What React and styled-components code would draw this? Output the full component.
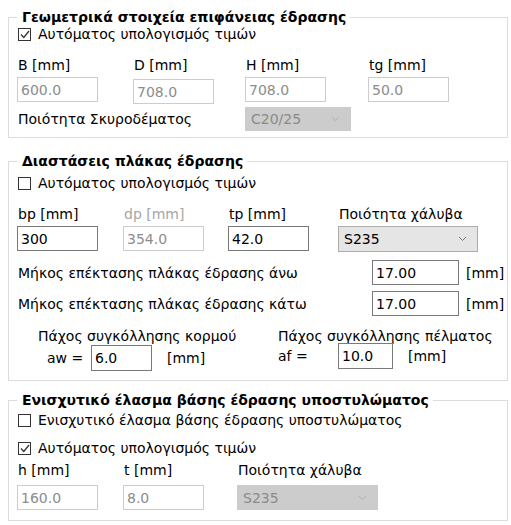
import styled, { createGlobalStyle } from "styled-components";

const GlobalStyle = createGlobalStyle`
  html, body {
    margin: 0;
    background: #fff;
  }
  body {
    font-family: "DejaVu Sans", Verdana, sans-serif;
    font-size: 14px;
    color: #000;
  }
`;

const Page = styled.div`
  width: 500px;
  padding: 9px 0 0 8px;
`;

const Section = styled.fieldset`
  margin: ${(p) => p.$top || 0}px 0 0 0;
  padding: 0 8px ${(p) => p.$bottom || 6}px 8px;
  border: 1px solid #dcdcdc;
  min-width: 0;
`;

const Legend = styled.legend`
  padding: 0 4px 0 5px;
  font-weight: bold;
  font-size: 14px;
  line-height: 16px;
  color: #000;
`;

const CheckRow = styled.label`
  display: flex;
  align-items: center;
  gap: 7px;
  height: 15px;
  margin-top: ${(p) => p.$top || 0}px;
  padding-left: 1px;
  line-height: 15px;
`;

const Box = styled.span`
  width: 11px;
  height: 11px;
  border: 1px solid #333;
  background: #fff;
  display: flex;
  align-items: center;
  justify-content: center;
`;

const Grid = styled.div`
  display: grid;
  grid-template-columns: ${(p) => p.$cols};
  margin-top: ${(p) => p.$top || 0}px;
  align-items: ${(p) => p.$align || "start"};
`;

const Label = styled.span`
  line-height: 15px;
  padding-left: 1px;
  white-space: nowrap;
  color: ${(p) => (p.$dim ? "#a6a6a6" : "#000")};
  grid-column: ${(p) => p.$span || "auto"};
`;

const Input = styled.input`
  box-sizing: border-box;
  width: ${(p) => p.$w || 81}px;
  height: ${(p) => p.$h || 25}px;
  margin: ${(p) => p.$shift || 0}px 0 0 0;
  padding: 0 3px;
  border: 1px solid ${(p) => (p.disabled ? "#cccccc" : "#7a7a7a")};
  background: #fff;
  font-family: inherit;
  font-size: 14px;
  color: ${(p) => (p.disabled ? "#8c8c8c" : "#000")};
  outline: none;
`;

const Select = styled.div`
  box-sizing: border-box;
  width: ${(p) => p.$w}px;
  height: ${(p) => p.$h || 25}px;
  display: flex;
  align-items: center;
  justify-content: space-between;
  padding: 0 10px 0 5px;
  background: ${(p) => (p.$disabled ? "#cccccc" : "#e5e5e5")};
  border: 1px solid ${(p) => (p.$disabled ? "#cccccc" : "#acacac")};
  color: ${(p) => (p.$disabled ? "#8a8a8a" : "#000")};
`;

const LineRow = styled.div`
  display: grid;
  grid-template-columns: 347px 87px auto;
  column-gap: 7px;
  align-items: center;
  margin-top: ${(p) => p.$top || 0}px;
  padding-left: 1px;
  white-space: nowrap;
`;

const WeldGrid = styled.div`
  display: grid;
  grid-template-columns: 240px auto;
  margin-top: 13px;
`;

const WeldCol = styled.div`
  display: flex;
  flex-direction: column;
  padding-left: 21px;
  white-space: nowrap;
`;

const WeldTitle = styled.span`
  line-height: 15px;
`;

const WeldRow = styled.div`
  display: flex;
  align-items: center;
  margin: ${(p) => p.$top || 0}px 0 0 ${(p) => p.$indent || 0}px;
`;

const EqLabel = styled.span`
  width: ${(p) => p.$w}px;
`;

const Unit = styled.span`
  margin-left: 15px;
`;

const Check = ({ checked, top, children }) => (
  <CheckRow $top={top}>
    <Box>
      {checked && (
        <svg width="10" height="9" viewBox="0 0 10 9">
          <polyline points="1,4.5 3.8,7.5 9,1" fill="none" stroke="#333" strokeWidth="1.3" />
        </svg>
      )}
    </Box>
    {children}
  </CheckRow>
);

const Combo = ({ w, h, disabled, value }) => (
  <Select $w={w} $h={h} $disabled={disabled}>
    <span>{value}</span>
    <svg width="9" height="6" viewBox="0 0 9 6">
      <polyline points="1,1 4.5,4.5 8,1" fill="none" stroke={disabled ? "#b0b0b0" : "#777"} strokeWidth="1" />
    </svg>
  </Select>
);

export default function App() {
  return (
    <Page>
      <GlobalStyle />

      <Section $bottom={6}>
        <Legend>Γεωμετρικά στοιχεία επιφάνειας έδρασης</Legend>
        <Check checked top={2}>Αυτόματος υπολογισμός τιμών</Check>
        <Grid $cols="116px 112px 123px auto" $top={16}>
          <Label>B [mm]</Label>
          <Label>D [mm]</Label>
          <Label>H [mm]</Label>
          <Label>tg [mm]</Label>
        </Grid>
        <Grid $cols="116px 112px 123px auto" $top={4}>
          <Input disabled readOnly value="600.0" />
          <Input disabled readOnly value="708.0" $shift={2} />
          <Input disabled readOnly value="708.0" />
          <Input disabled readOnly value="50.0" />
        </Grid>
        <Grid $cols="116px 112px 123px auto" $top={3} $align="center">
          <Label $span="1 / 3">Ποιότητα Σκυροδέματος</Label>
          <Combo w={106} h={24} disabled value="C20/25" />
        </Grid>
      </Section>

      <Section $top={15} $bottom={9}>
        <Legend>Διαστάσεις πλάκας έδρασης</Legend>
        <Check top={7}>Αυτόματος υπολογισμός τιμών</Check>
        <Grid $cols="106px 105px 110px auto" $top={16}>
          <Label>bp [mm]</Label>
          <Label $dim>dp [mm]</Label>
          <Label>tp [mm]</Label>
          <Label>Ποιότητα χάλυβα</Label>
        </Grid>
        <Grid $cols="106px 105px 110px auto" $top={4}>
          <Input readOnly value="300" />
          <Input disabled readOnly value="354.0" />
          <Input readOnly value="42.0" />
          <Combo w={140} h={26} value="S235" />
        </Grid>
        <LineRow $top={8}>
          <span>Μήκος επέκτασης πλάκας έδρασης άνω</span>
          <Input readOnly value="17.00" $w={87} />
          <span>[mm]</span>
        </LineRow>
        <LineRow $top={6}>
          <span>Μήκος επέκτασης πλάκας έδρασης κάτω</span>
          <Input readOnly value="17.00" $w={87} />
          <span>[mm]</span>
        </LineRow>
        <WeldGrid>
          <WeldCol>
            <WeldTitle>Πάχος συγκόλλησης κορμού</WeldTitle>
            <WeldRow $indent={9} $top={1}>
              <EqLabel $w={44}>aw =</EqLabel>
              <Input readOnly value="6.0" $w={61} $h={26} />
              <Unit>[mm]</Unit>
            </WeldRow>
          </WeldCol>
          <WeldCol>
            <WeldTitle>Πάχος συγκόλλησης πέλματος</WeldTitle>
            <WeldRow $top={-1}>
              <EqLabel $w={60}>af =</EqLabel>
              <Input readOnly value="10.0" $w={55} $h={26} />
              <Unit>[mm]</Unit>
            </WeldRow>
          </WeldCol>
        </WeldGrid>
      </Section>

      <Section $top={11} $bottom={10}>
        <Legend>Ενισχυτικό έλασμα βάσης έδρασης υποστυλώματος</Legend>
        <Check top={5}>Ενισχυτικό έλασμα βάσης έδρασης υποστυλώματος</Check>
        <Check checked top={13}>Αυτόματος υπολογισμός τιμών</Check>
        <Grid $cols="106px 114px auto" $top={7}>
          <Label>h [mm]</Label>
          <Label>t [mm]</Label>
          <Label>Ποιότητα χάλυβα</Label>
        </Grid>
        <Grid $cols="106px 114px auto" $top={7}>
          <Input disabled readOnly value="160.0" />
          <Input disabled readOnly value="8.0" />
          <Combo w={141} h={25} disabled value="S235" />
        </Grid>
      </Section>
    </Page>
  );
}
